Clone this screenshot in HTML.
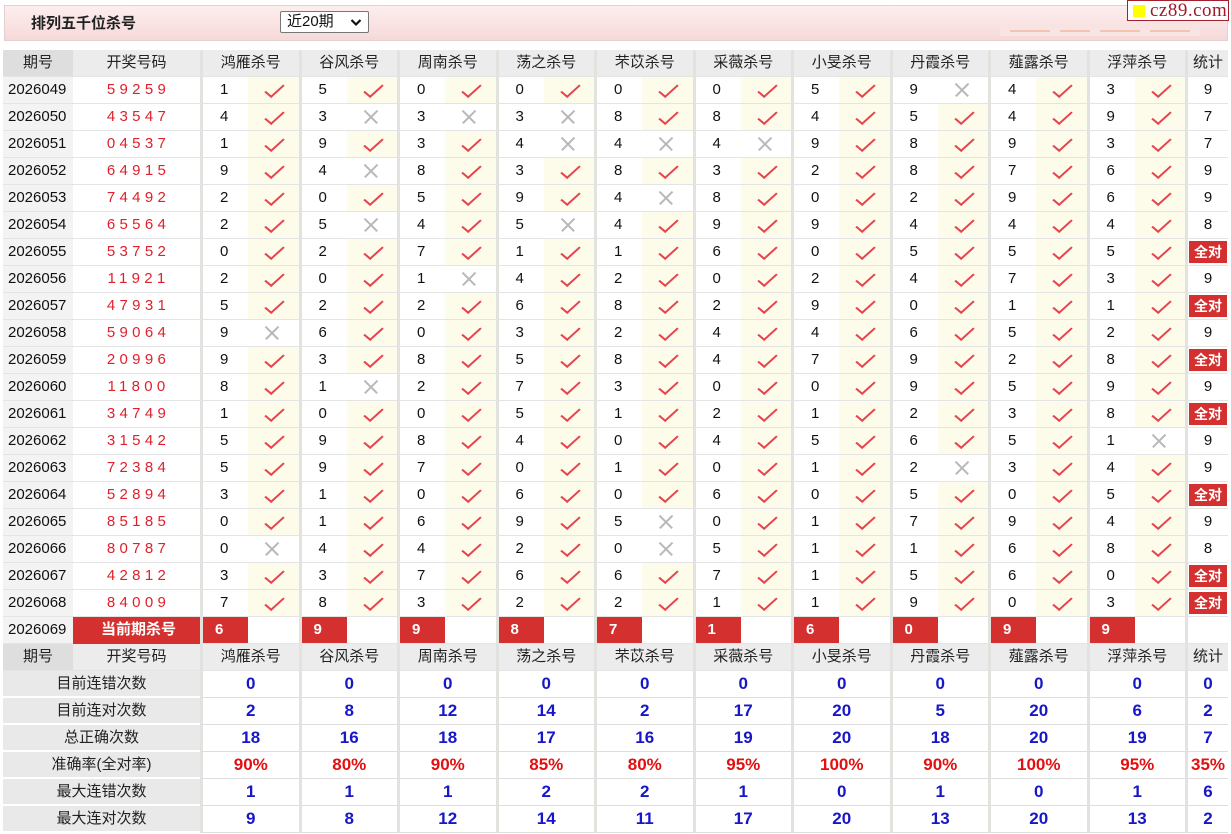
<!DOCTYPE html>
<html><head><meta charset="utf-8">
<style>
*{box-sizing:border-box;margin:0;padding:0}
body{width:1231px;height:834px;background:#fff;font-family:"Liberation Sans","Noto Sans CJK SC",sans-serif;position:relative;overflow:hidden;color:#111}
.top{position:absolute;left:4px;top:5px;width:1224px;height:36px;background:linear-gradient(#fdeeee,#f6d9d9);border:1px solid #e6cfcf}
.title{position:absolute;left:26px;top:6px;font-size:15px;font-weight:bold;color:#222}
.sel{position:absolute;left:275px;top:5px;width:89px;height:22px;background:#fff;border:1px solid #777;border-radius:2px;font-size:15px;padding-left:6px;line-height:20px}
.sel svg{position:absolute;right:6px;top:6px}
.faint{position:absolute;left:995px;top:20px;width:200px;height:10px;background:#f8e4e2}
.faint i{position:absolute;top:4px;height:2px;background:#f4c4b2}
.logo{position:absolute;left:1127px;top:0;width:102px;height:21px;background:#fff;border:1px solid #a02030;font-family:"Liberation Serif",serif;font-size:19px;color:#a01a2a;line-height:19px;padding-left:22px;letter-spacing:0.5px}
.logo:before{content:"";position:absolute;left:5px;top:4px;width:12px;height:12px;background:#ff0}
.tb{position:absolute;left:3px;top:50px;width:1225px}
.r{display:flex;height:27px}
.r>span{height:27px;border-bottom:1px solid #e4e4e4;font-size:15px;line-height:26px;white-space:nowrap;overflow:hidden;position:relative}
.p{width:70px;background:#f3f3f3;padding-left:5px}
.c{width:127px;text-align:center;color:#e0202b;letter-spacing:4.3px;padding-left:4px}
.n{width:48px;border-left:3px solid #e2e2de;padding-left:17px}
.k{width:50.5px;background:#fdfbea;font-size:0!important}
.k:before{content:"";position:absolute;left:22px;top:3px;width:7px;height:16px;border-right:2px solid #e8424c;border-bottom:2px solid #e8424c;transform:rotate(40deg) skewX(-8deg)}
.k.x{background:#fff}
.k.x:before,.k.x:after{content:"";position:absolute;left:15px;top:12px;width:18px;height:1.5px;background:#b8b8b8;border:0;transform:rotate(45deg)}
.k.x:after{transform:rotate(-45deg)}
.cur .k:before{display:none}
.s{width:43px;border-left:3px solid #e2e2de;text-align:center}
.s.a{background:#fff}
.s.a b{display:inline-block;background:#d3302f;color:#fff;font-size:14px;line-height:22px;height:22px;width:38px;margin-top:2px}
.h>span{background:#ececec;text-align:center;color:#222}
.h .p{background:#dedede;text-align:center;padding-left:0}
.h .g{width:98.5px;border-left:3px solid #e2e2de}
.h .s{width:43px}
.cur .c{background:#d3302f;color:#fff;font-weight:bold;letter-spacing:0;border-bottom-color:#d3302f}
.cur .n{background:#d3302f;color:#fff;font-weight:bold;padding-left:12px}
.cur .k{background:#fff}
.st>span{border-bottom:1px solid #ddd}
.st .l{width:197px;background:#e9e9e9;text-align:center;color:#222;border-bottom:2px solid #fff}
.st .v{width:98.5px;border-left:3px solid #e2e2de;text-align:center;font-weight:bold;font-size:17px;color:#1717c8}
.st .v.rd{color:#e21010}
.st .s{font-weight:bold;font-size:17px;color:#1717c8}
.st .s.rd{color:#e21010}
</style></head><body>
<div class="top"><div class="title">排列五千位杀号</div>
<div class="sel">近20期<svg width="12" height="9" viewBox="0 0 12 9"><path d="M1.5 2 L6 6.5 L10.5 2" stroke="#111" stroke-width="2.2" fill="none"/></svg></div>
<div class="faint"><i style="left:10px;width:40px"></i><i style="left:60px;width:30px"></i><i style="left:100px;width:40px"></i><i style="left:150px;width:40px"></i></div>
</div>
<div class="logo">cz89.com</div>

<div class="tb">
<div class="r h"><span class="p">期号</span><span class="c" style="color:#222;letter-spacing:0;padding-left:0">开奖号码</span><span class="g">鸿雁杀号</span><span class="g">谷风杀号</span><span class="g">周南杀号</span><span class="g">荡之杀号</span><span class="g">芣苡杀号</span><span class="g">采薇杀号</span><span class="g">小旻杀号</span><span class="g">丹霞杀号</span><span class="g">薤露杀号</span><span class="g">浮萍杀号</span><span class="s">统计</span></div>

<div class="r"><span class="p">2026049</span><span class="c">59259</span><span class="n">1</span><span class="k">✓</span><span class="n">5</span><span class="k">✓</span><span class="n">0</span><span class="k">✓</span><span class="n">0</span><span class="k">✓</span><span class="n">0</span><span class="k">✓</span><span class="n">0</span><span class="k">✓</span><span class="n">5</span><span class="k">✓</span><span class="n">9</span><span class="k x">✕</span><span class="n">4</span><span class="k">✓</span><span class="n">3</span><span class="k">✓</span><span class="s">9</span></div>
<div class="r"><span class="p">2026050</span><span class="c">43547</span><span class="n">4</span><span class="k">✓</span><span class="n">3</span><span class="k x">✕</span><span class="n">3</span><span class="k x">✕</span><span class="n">3</span><span class="k x">✕</span><span class="n">8</span><span class="k">✓</span><span class="n">8</span><span class="k">✓</span><span class="n">4</span><span class="k">✓</span><span class="n">5</span><span class="k">✓</span><span class="n">4</span><span class="k">✓</span><span class="n">9</span><span class="k">✓</span><span class="s">7</span></div>
<div class="r"><span class="p">2026051</span><span class="c">04537</span><span class="n">1</span><span class="k">✓</span><span class="n">9</span><span class="k">✓</span><span class="n">3</span><span class="k">✓</span><span class="n">4</span><span class="k x">✕</span><span class="n">4</span><span class="k x">✕</span><span class="n">4</span><span class="k x">✕</span><span class="n">9</span><span class="k">✓</span><span class="n">8</span><span class="k">✓</span><span class="n">9</span><span class="k">✓</span><span class="n">3</span><span class="k">✓</span><span class="s">7</span></div>
<div class="r"><span class="p">2026052</span><span class="c">64915</span><span class="n">9</span><span class="k">✓</span><span class="n">4</span><span class="k x">✕</span><span class="n">8</span><span class="k">✓</span><span class="n">3</span><span class="k">✓</span><span class="n">8</span><span class="k">✓</span><span class="n">3</span><span class="k">✓</span><span class="n">2</span><span class="k">✓</span><span class="n">8</span><span class="k">✓</span><span class="n">7</span><span class="k">✓</span><span class="n">6</span><span class="k">✓</span><span class="s">9</span></div>
<div class="r"><span class="p">2026053</span><span class="c">74492</span><span class="n">2</span><span class="k">✓</span><span class="n">0</span><span class="k">✓</span><span class="n">5</span><span class="k">✓</span><span class="n">9</span><span class="k">✓</span><span class="n">4</span><span class="k x">✕</span><span class="n">8</span><span class="k">✓</span><span class="n">0</span><span class="k">✓</span><span class="n">2</span><span class="k">✓</span><span class="n">9</span><span class="k">✓</span><span class="n">6</span><span class="k">✓</span><span class="s">9</span></div>
<div class="r"><span class="p">2026054</span><span class="c">65564</span><span class="n">2</span><span class="k">✓</span><span class="n">5</span><span class="k x">✕</span><span class="n">4</span><span class="k">✓</span><span class="n">5</span><span class="k x">✕</span><span class="n">4</span><span class="k">✓</span><span class="n">9</span><span class="k">✓</span><span class="n">9</span><span class="k">✓</span><span class="n">4</span><span class="k">✓</span><span class="n">4</span><span class="k">✓</span><span class="n">4</span><span class="k">✓</span><span class="s">8</span></div>
<div class="r"><span class="p">2026055</span><span class="c">53752</span><span class="n">0</span><span class="k">✓</span><span class="n">2</span><span class="k">✓</span><span class="n">7</span><span class="k">✓</span><span class="n">1</span><span class="k">✓</span><span class="n">1</span><span class="k">✓</span><span class="n">6</span><span class="k">✓</span><span class="n">0</span><span class="k">✓</span><span class="n">5</span><span class="k">✓</span><span class="n">5</span><span class="k">✓</span><span class="n">5</span><span class="k">✓</span><span class="s a"><b>全对</b></span></div>
<div class="r"><span class="p">2026056</span><span class="c">11921</span><span class="n">2</span><span class="k">✓</span><span class="n">0</span><span class="k">✓</span><span class="n">1</span><span class="k x">✕</span><span class="n">4</span><span class="k">✓</span><span class="n">2</span><span class="k">✓</span><span class="n">0</span><span class="k">✓</span><span class="n">2</span><span class="k">✓</span><span class="n">4</span><span class="k">✓</span><span class="n">7</span><span class="k">✓</span><span class="n">3</span><span class="k">✓</span><span class="s">9</span></div>
<div class="r"><span class="p">2026057</span><span class="c">47931</span><span class="n">5</span><span class="k">✓</span><span class="n">2</span><span class="k">✓</span><span class="n">2</span><span class="k">✓</span><span class="n">6</span><span class="k">✓</span><span class="n">8</span><span class="k">✓</span><span class="n">2</span><span class="k">✓</span><span class="n">9</span><span class="k">✓</span><span class="n">0</span><span class="k">✓</span><span class="n">1</span><span class="k">✓</span><span class="n">1</span><span class="k">✓</span><span class="s a"><b>全对</b></span></div>
<div class="r"><span class="p">2026058</span><span class="c">59064</span><span class="n">9</span><span class="k x">✕</span><span class="n">6</span><span class="k">✓</span><span class="n">0</span><span class="k">✓</span><span class="n">3</span><span class="k">✓</span><span class="n">2</span><span class="k">✓</span><span class="n">4</span><span class="k">✓</span><span class="n">4</span><span class="k">✓</span><span class="n">6</span><span class="k">✓</span><span class="n">5</span><span class="k">✓</span><span class="n">2</span><span class="k">✓</span><span class="s">9</span></div>
<div class="r"><span class="p">2026059</span><span class="c">20996</span><span class="n">9</span><span class="k">✓</span><span class="n">3</span><span class="k">✓</span><span class="n">8</span><span class="k">✓</span><span class="n">5</span><span class="k">✓</span><span class="n">8</span><span class="k">✓</span><span class="n">4</span><span class="k">✓</span><span class="n">7</span><span class="k">✓</span><span class="n">9</span><span class="k">✓</span><span class="n">2</span><span class="k">✓</span><span class="n">8</span><span class="k">✓</span><span class="s a"><b>全对</b></span></div>
<div class="r"><span class="p">2026060</span><span class="c">11800</span><span class="n">8</span><span class="k">✓</span><span class="n">1</span><span class="k x">✕</span><span class="n">2</span><span class="k">✓</span><span class="n">7</span><span class="k">✓</span><span class="n">3</span><span class="k">✓</span><span class="n">0</span><span class="k">✓</span><span class="n">0</span><span class="k">✓</span><span class="n">9</span><span class="k">✓</span><span class="n">5</span><span class="k">✓</span><span class="n">9</span><span class="k">✓</span><span class="s">9</span></div>
<div class="r"><span class="p">2026061</span><span class="c">34749</span><span class="n">1</span><span class="k">✓</span><span class="n">0</span><span class="k">✓</span><span class="n">0</span><span class="k">✓</span><span class="n">5</span><span class="k">✓</span><span class="n">1</span><span class="k">✓</span><span class="n">2</span><span class="k">✓</span><span class="n">1</span><span class="k">✓</span><span class="n">2</span><span class="k">✓</span><span class="n">3</span><span class="k">✓</span><span class="n">8</span><span class="k">✓</span><span class="s a"><b>全对</b></span></div>
<div class="r"><span class="p">2026062</span><span class="c">31542</span><span class="n">5</span><span class="k">✓</span><span class="n">9</span><span class="k">✓</span><span class="n">8</span><span class="k">✓</span><span class="n">4</span><span class="k">✓</span><span class="n">0</span><span class="k">✓</span><span class="n">4</span><span class="k">✓</span><span class="n">5</span><span class="k">✓</span><span class="n">6</span><span class="k">✓</span><span class="n">5</span><span class="k">✓</span><span class="n">1</span><span class="k x">✕</span><span class="s">9</span></div>
<div class="r"><span class="p">2026063</span><span class="c">72384</span><span class="n">5</span><span class="k">✓</span><span class="n">9</span><span class="k">✓</span><span class="n">7</span><span class="k">✓</span><span class="n">0</span><span class="k">✓</span><span class="n">1</span><span class="k">✓</span><span class="n">0</span><span class="k">✓</span><span class="n">1</span><span class="k">✓</span><span class="n">2</span><span class="k x">✕</span><span class="n">3</span><span class="k">✓</span><span class="n">4</span><span class="k">✓</span><span class="s">9</span></div>
<div class="r"><span class="p">2026064</span><span class="c">52894</span><span class="n">3</span><span class="k">✓</span><span class="n">1</span><span class="k">✓</span><span class="n">0</span><span class="k">✓</span><span class="n">6</span><span class="k">✓</span><span class="n">0</span><span class="k">✓</span><span class="n">6</span><span class="k">✓</span><span class="n">0</span><span class="k">✓</span><span class="n">5</span><span class="k">✓</span><span class="n">0</span><span class="k">✓</span><span class="n">5</span><span class="k">✓</span><span class="s a"><b>全对</b></span></div>
<div class="r"><span class="p">2026065</span><span class="c">85185</span><span class="n">0</span><span class="k">✓</span><span class="n">1</span><span class="k">✓</span><span class="n">6</span><span class="k">✓</span><span class="n">9</span><span class="k">✓</span><span class="n">5</span><span class="k x">✕</span><span class="n">0</span><span class="k">✓</span><span class="n">1</span><span class="k">✓</span><span class="n">7</span><span class="k">✓</span><span class="n">9</span><span class="k">✓</span><span class="n">4</span><span class="k">✓</span><span class="s">9</span></div>
<div class="r"><span class="p">2026066</span><span class="c">80787</span><span class="n">0</span><span class="k x">✕</span><span class="n">4</span><span class="k">✓</span><span class="n">4</span><span class="k">✓</span><span class="n">2</span><span class="k">✓</span><span class="n">0</span><span class="k x">✕</span><span class="n">5</span><span class="k">✓</span><span class="n">1</span><span class="k">✓</span><span class="n">1</span><span class="k">✓</span><span class="n">6</span><span class="k">✓</span><span class="n">8</span><span class="k">✓</span><span class="s">8</span></div>
<div class="r"><span class="p">2026067</span><span class="c">42812</span><span class="n">3</span><span class="k">✓</span><span class="n">3</span><span class="k">✓</span><span class="n">7</span><span class="k">✓</span><span class="n">6</span><span class="k">✓</span><span class="n">6</span><span class="k">✓</span><span class="n">7</span><span class="k">✓</span><span class="n">1</span><span class="k">✓</span><span class="n">5</span><span class="k">✓</span><span class="n">6</span><span class="k">✓</span><span class="n">0</span><span class="k">✓</span><span class="s a"><b>全对</b></span></div>
<div class="r"><span class="p">2026068</span><span class="c">84009</span><span class="n">7</span><span class="k">✓</span><span class="n">8</span><span class="k">✓</span><span class="n">3</span><span class="k">✓</span><span class="n">2</span><span class="k">✓</span><span class="n">2</span><span class="k">✓</span><span class="n">1</span><span class="k">✓</span><span class="n">1</span><span class="k">✓</span><span class="n">9</span><span class="k">✓</span><span class="n">0</span><span class="k">✓</span><span class="n">3</span><span class="k">✓</span><span class="s a"><b>全对</b></span></div>
<div class="r cur"><span class="p">2026069</span><span class="c">当前期杀号</span><span class="n">6</span><span class="k"></span><span class="n">9</span><span class="k"></span><span class="n">9</span><span class="k"></span><span class="n">8</span><span class="k"></span><span class="n">7</span><span class="k"></span><span class="n">1</span><span class="k"></span><span class="n">6</span><span class="k"></span><span class="n">0</span><span class="k"></span><span class="n">9</span><span class="k"></span><span class="n">9</span><span class="k"></span><span class="s"></span></div>

<div class="r h"><span class="p">期号</span><span class="c" style="color:#222;letter-spacing:0;padding-left:0">开奖号码</span><span class="g">鸿雁杀号</span><span class="g">谷风杀号</span><span class="g">周南杀号</span><span class="g">荡之杀号</span><span class="g">芣苡杀号</span><span class="g">采薇杀号</span><span class="g">小旻杀号</span><span class="g">丹霞杀号</span><span class="g">薤露杀号</span><span class="g">浮萍杀号</span><span class="s">统计</span></div>
<div class="r st"><span class="l">目前连错次数</span><span class="v">0</span><span class="v">0</span><span class="v">0</span><span class="v">0</span><span class="v">0</span><span class="v">0</span><span class="v">0</span><span class="v">0</span><span class="v">0</span><span class="v">0</span><span class="s">0</span></div>
<div class="r st"><span class="l">目前连对次数</span><span class="v">2</span><span class="v">8</span><span class="v">12</span><span class="v">14</span><span class="v">2</span><span class="v">17</span><span class="v">20</span><span class="v">5</span><span class="v">20</span><span class="v">6</span><span class="s">2</span></div>
<div class="r st"><span class="l">总正确次数</span><span class="v">18</span><span class="v">16</span><span class="v">18</span><span class="v">17</span><span class="v">16</span><span class="v">19</span><span class="v">20</span><span class="v">18</span><span class="v">20</span><span class="v">19</span><span class="s">7</span></div>
<div class="r st"><span class="l">准确率(全对率)</span><span class="v rd">90%</span><span class="v rd">80%</span><span class="v rd">90%</span><span class="v rd">85%</span><span class="v rd">80%</span><span class="v rd">95%</span><span class="v rd">100%</span><span class="v rd">90%</span><span class="v rd">100%</span><span class="v rd">95%</span><span class="s rd">35%</span></div>
<div class="r st"><span class="l">最大连错次数</span><span class="v">1</span><span class="v">1</span><span class="v">1</span><span class="v">2</span><span class="v">2</span><span class="v">1</span><span class="v">0</span><span class="v">1</span><span class="v">0</span><span class="v">1</span><span class="s">6</span></div>
<div class="r st"><span class="l">最大连对次数</span><span class="v">9</span><span class="v">8</span><span class="v">12</span><span class="v">14</span><span class="v">11</span><span class="v">17</span><span class="v">20</span><span class="v">13</span><span class="v">20</span><span class="v">13</span><span class="s">2</span></div>
</div>
</body></html>
